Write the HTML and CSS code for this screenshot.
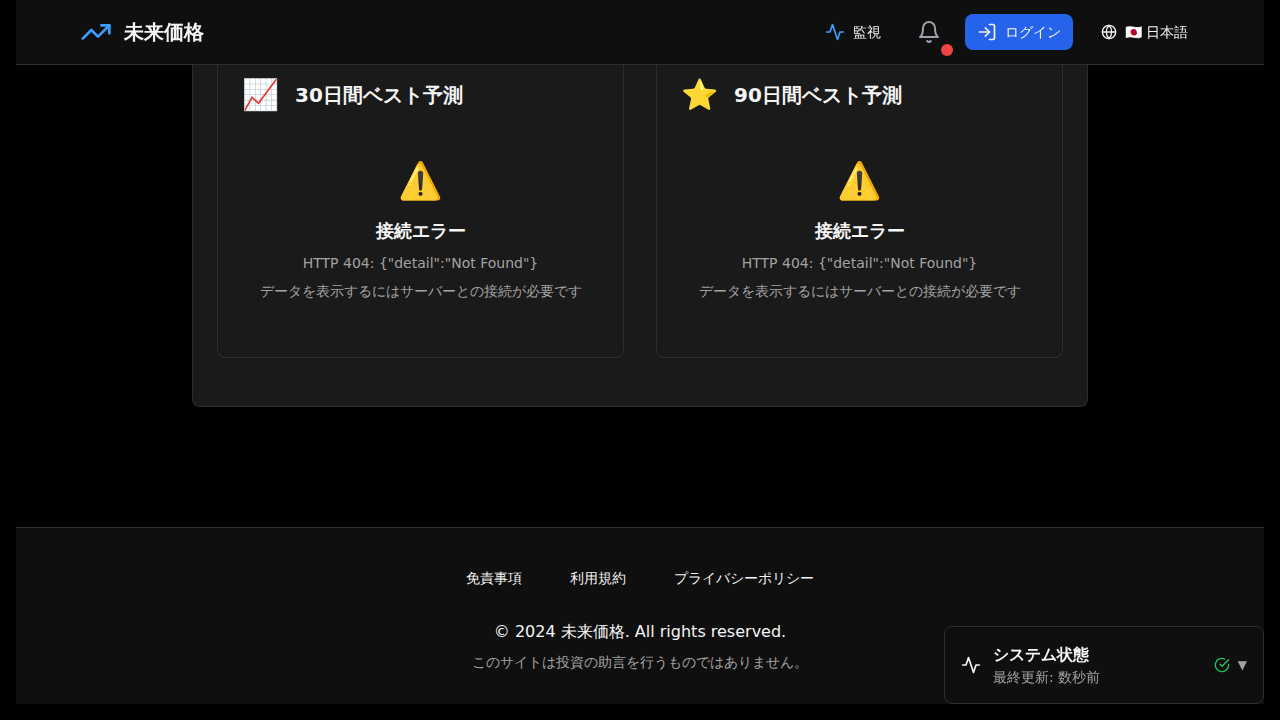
FILE: index.html
```html
<!DOCTYPE html>
<html lang="ja">
<head>
<meta charset="utf-8">
<title>未来価格</title>
<link rel="stylesheet" href="styles.css">
</head>
<body>
<div class="page">
  <header class="header">
    <div class="brand">
      <svg class="icon brand-icon" width="32" height="32" viewBox="0 0 24 24"><path d="M22 7 13.5 15.5 8.5 10.5 2 17"/><path d="M16 7h6v6"/></svg>
      <span>未来価格</span>
    </div>
    <nav class="nav">
      <a class="monitor"><svg class="icon blue" width="20" height="20" viewBox="0 0 24 24"><path d="M22 12h-4l-3 9L9 3l-3 9H2"/></svg>監視</a>
      <button class="bell"><svg class="icon" width="24" height="24" viewBox="0 0 24 24"><path d="M6 8a6 6 0 0 1 12 0c0 7 3 9 3 9H3s3-2 3-9"/><path d="M10.3 21a1.94 1.94 0 0 0 3.4 0"/></svg><i class="dot"></i></button>
      <a class="login"><svg class="icon" width="20" height="20" viewBox="0 0 24 24"><path d="M15 3h4a2 2 0 0 1 2 2v14a2 2 0 0 1-2 2h-4"/><path d="m10 17 5-5-5-5"/><path d="M15 12H3"/></svg>ログイン</a>
      <a class="language"><svg class="icon" width="16" height="16" viewBox="0 0 24 24"><circle cx="12" cy="12" r="10"/><path d="M12 2a14.5 14.5 0 0 0 0 20 14.5 14.5 0 0 0 0-20"/><path d="M2 12h20"/></svg><span>🇯🇵 日本語</span></a>
    </nav>
  </header>
  <main class="panel">
    <section class="card">
      <h2 class="card-title"><span class="emoji">📈</span>30日間ベスト予測</h2>
      <div class="error"><div class="warning">⚠️</div><h3>接続エラー</h3><p>HTTP 404: {"detail":"Not Found"}</p><p>データを表示するにはサーバーとの接続が必要です</p></div>
    </section>
    <section class="card">
      <h2 class="card-title"><span class="emoji">⭐</span>90日間ベスト予測</h2>
      <div class="error"><div class="warning">⚠️</div><h3>接続エラー</h3><p>HTTP 404: {"detail":"Not Found"}</p><p>データを表示するにはサーバーとの接続が必要です</p></div>
    </section>
  </main>
  <footer class="footer">
    <div class="links"><a>免責事項</a><a>利用規約</a><a>プライバシーポリシー</a></div>
    <p class="copyright">© 2024 未来価格. All rights reserved.</p>
    <p class="notice">このサイトは投資の助言を行うものではありません。</p>
  </footer>
</div>
<aside class="status">
  <svg class="icon" width="20" height="20" viewBox="0 0 24 24"><path d="M22 12h-4l-3 9L9 3l-3 9H2"/></svg>
  <div class="status-copy"><strong>システム状態</strong><span>最終更新: 数秒前</span></div>
  <svg class="icon green" width="16" height="16" viewBox="0 0 24 24"><path d="M22 11.08V12a10 10 0 1 1-5.93-9.14"/><path d="m9 11 3 3L22 4"/></svg>
  <span class="arrow">▼</span>
</aside>
</body>
</html>
```
FILE: styles.css
```css
* { box-sizing: border-box; }
body { margin: 0; background: #000; color: #f5f5f5; font-family: "DejaVu Sans", sans-serif; height: 720px; overflow: hidden; }
h2, h3, p { margin: 0; }
.page { padding: 0 16px; }
.icon { display: block; flex: none; fill: none; stroke: currentColor; stroke-width: 2; stroke-linecap: round; stroke-linejoin: round; }
.blue, .brand-icon { color: #3b9eff; }
.green { color: #22c55e; }
.header { height: 65px; padding: 0 64px; display: flex; align-items: center; justify-content: space-between; background: #0f0f0f; border-bottom: 1px solid #2e2e2e; will-change: transform; }
.brand { display: flex; align-items: center; gap: 12px; font-size: 20px; line-height: 28px; font-weight: 700; }
.nav { display: flex; align-items: center; font-size: 14px; line-height: 20px; }
.monitor, .login, .language { display: flex; align-items: center; gap: 8px; }
.bell { position: relative; margin: 0 24px 0 36px; padding: 0; border: 0; background: none; color: #9ca3af; }
.dot { position: absolute; left: 24px; top: 24px; width: 12px; height: 12px; border-radius: 50%; background: #ef4444; }
.login { height: 36px; width: 108px; padding: 0 12px; border-radius: 8px; background: #2563eb; margin-right: 28px; white-space: nowrap; }
.language { margin-right: 12px; }
.panel { width: 896px; height: 342px; margin: 0 auto; padding: 0 24px; display: grid; grid-template-columns: 1fr 1fr; gap: 32px; background: #1a1a1a; border: 1px solid #2e2e2e; border-top: 0; border-radius: 0 0 8px 8px; }
.card { height: 293px; padding: 12px 24px; border: 1px solid #2e2e2e; border-top: 0; border-radius: 0 0 8px 8px; box-shadow: 0 1px 2px rgba(0, 0, 0, .05); }
.card-title { height: 36px; display: flex; align-items: center; gap: 16px; font-size: 20px; line-height: 28px; }
.emoji { width: 37px; font-size: 30px; line-height: 36px; font-weight: 400; }
.error { padding-top: 44px; text-align: center; }
.warning { font-size: 36px; line-height: 48px; height: 48px; }
.error h3 { margin-top: 12px; font-size: 18px; line-height: 28px; }
.error p { margin-top: 8px; font-size: 14px; line-height: 20px; color: #a3a3a3; }
.footer { margin-top: 120px; height: 177px; padding-top: 40px; background: #0f0f0f; border-top: 1px solid #2e2e2e; text-align: center; }
.links { display: flex; justify-content: center; gap: 48px; font-size: 14px; line-height: 20px; }
.copyright { margin-top: 32px; font-size: 16px; line-height: 24px; }
.notice { margin-top: 8px; font-size: 14px; line-height: 20px; color: #a3a3a3; }
.status { position: fixed; right: 16px; bottom: 16px; width: 320px; height: 78px; padding: 0 16px; display: flex; align-items: center; background: #0f0f0f; border: 1px solid #2e2e2e; border-radius: 8px; box-shadow: 0 10px 15px -3px rgba(0, 0, 0, .1); will-change: transform; }
.status-copy { flex: 1; margin-left: 12px; }
.status-copy strong, .status-copy span { display: block; }
.status-copy strong { font-size: 16px; line-height: 24px; }
.status-copy span { font-size: 14px; line-height: 20px; color: #a3a3a3; }
.arrow { margin-left: 8px; font-size: 12px; color: #a3a3a3; }
```
